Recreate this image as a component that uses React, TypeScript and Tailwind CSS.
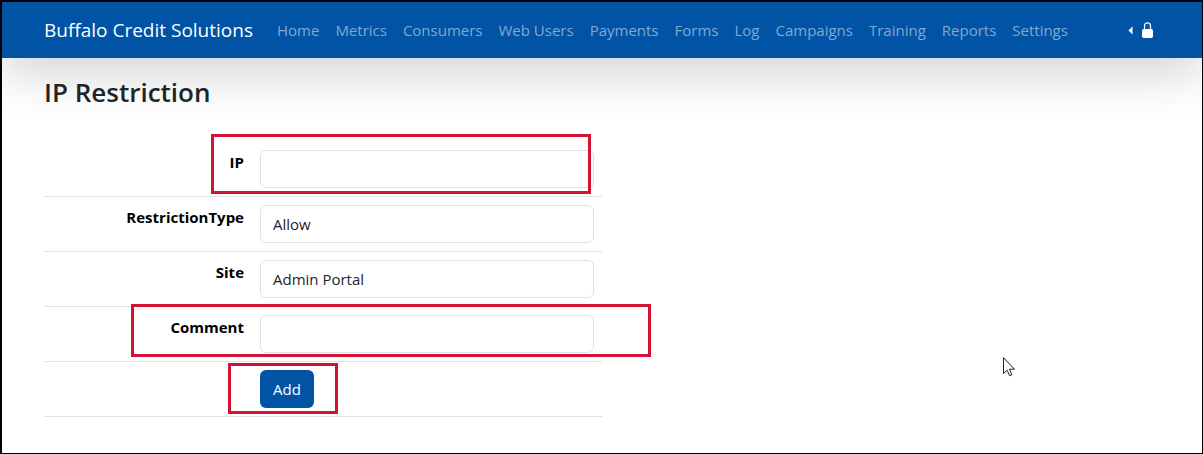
import type { ReactNode } from "react";

const links = [
  "Home", "Metrics", "Consumers", "Web Users", "Payments", "Forms",
  "Log", "Campaigns", "Training", "Reports", "Settings",
];

const control =
  "block h-[38px] w-full appearance-none rounded-md border border-[#dee2e6] bg-white px-3 text-[15px] leading-6 text-[#212529]";

function Highlight({ place }: { place: string }) {
  return (
    <span
      aria-hidden="true"
      className={`pointer-events-none absolute border-3 border-[#d31334] ${place}`}
    />
  );
}

function Row({ id, label, children }: { id?: string; label?: string; children: ReactNode }) {
  return (
    <tr className="border-b border-[#dee2e6]">
      <th scope="row" className="w-[208px] p-2 text-right align-top text-[15px] leading-6 font-bold text-black">
        {label && <label htmlFor={id}>{label}</label>}
      </th>
      <td className="relative p-2">{children}</td>
    </tr>
  );
}

function Navbar() {
  return (
    <header className="flex h-14 items-center bg-[#0153a5] px-[42px] shadow-[0_16px_48px_rgba(0,0,0,0.175)]">
      <a href="#" className="mr-6 text-[19px] leading-7 whitespace-nowrap text-white">
        Buffalo Credit Solutions
      </a>
      <nav className="flex gap-4 text-[15px] leading-6 whitespace-nowrap text-[#80a9d2]">
        {links.map((name) => (
          <a key={name} href="#">{name}</a>
        ))}
      </nav>
      <button type="button" aria-label="Account" className="mr-1.5 ml-auto flex items-center gap-2">
        <svg width="5" height="9" viewBox="0 0 5 9" fill="white">
          <path d="M4.5 0.5v8L0.5 4.5z" />
        </svg>
        <svg width="13" height="16" viewBox="0 0 13 16" fill="none">
          <path d="M3.5 8V3.8C3.5 1.9 4.6.8 6.5.8s3 1.1 3 3V8" stroke="white" strokeWidth="1.2" />
          <rect x="1" y="7" width="11" height="9" rx="1.8" fill="white" />
        </svg>
      </button>
    </header>
  );
}

export default function App() {
  return (
    <div className="relative min-h-screen overflow-hidden border-t-2 border-r border-b border-l-2 border-black bg-white font-['Open_Sans','Noto_Sans',sans-serif] text-[#212529]">
      <Navbar />
      <main className="relative px-[42px] pt-[17px]">
        <h1 className="text-[26px] leading-[34px] font-semibold">IP Restriction</h1>
        <form className="mt-[33px] w-1/2" onSubmit={(e) => e.preventDefault()}>
          <table className="w-full table-fixed border-collapse">
            <tbody>
              <Row id="ip" label="IP">
                <input id="ip" type="text" className={control} />
                <Highlight place="-top-2 -left-[41px] h-[60px] w-[380px]" />
              </Row>
              <Row id="restriction-type" label="RestrictionType">
                <select id="restriction-type" className={control}>
                  <option>Allow</option>
                </select>
              </Row>
              <Row id="site" label="Site">
                <select id="site" className={control}>
                  <option>Admin Portal</option>
                </select>
              </Row>
              <Row id="comment" label="Comment">
                <input id="comment" type="text" className={control} />
                <Highlight place="-top-[3px] -left-[121px] h-[53px] w-[520px]" />
              </Row>
              <Row>
                <button type="submit" className="block h-[38px] rounded-md bg-[#0153a5] px-[13px] text-[15px] leading-6 text-white">
                  Add
                </button>
                <Highlight place="top-px -left-6 h-[51px] w-[110px]" />
              </Row>
            </tbody>
          </table>
        </form>
      </main>
      <svg className="absolute top-[355px] left-[1001px]" width="12" height="20" viewBox="0 0 12 20" aria-hidden="true">
        <path d="M.5.7v15.8l3.6-3.4 2.5 5.6 2.3-1-2.4-5.5h5z" fill="white" stroke="#1b1b2b" strokeWidth="1" />
      </svg>
    </div>
  );
}
